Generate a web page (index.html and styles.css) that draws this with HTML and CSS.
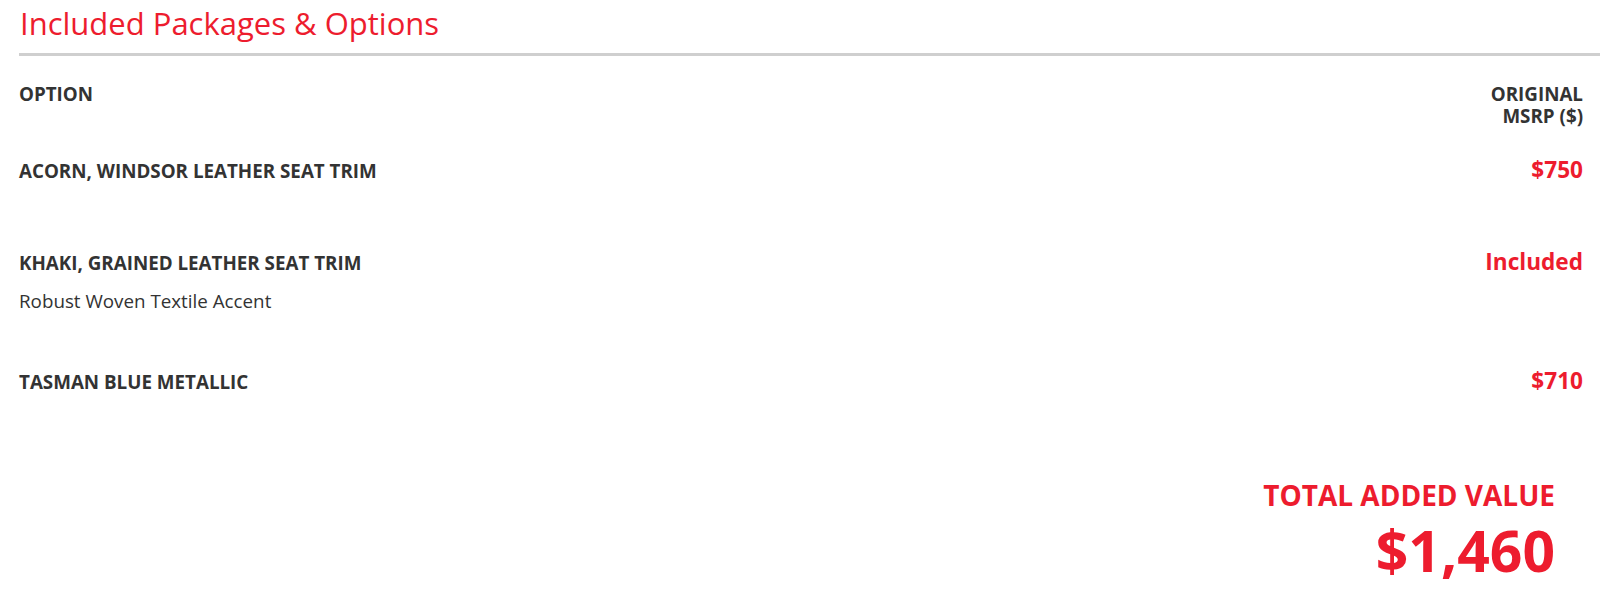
FILE: index.html
```html
<!DOCTYPE html>
<html>
  <head>
    <meta charset="utf-8" />
    <title>Included Packages &amp; Options</title>
    <link rel="stylesheet" href="styles.css">
  </head>

  <body>
    <div id="packages">
      <h2>Included Packages &amp; Options</h2>

      <div class="options">
        <div class="row head">
          <div class="name">OPTION</div>
          <div class="price">ORIGINAL MSRP ($)</div>
        </div>

        <div class="row">
          <div class="name">ACORN, WINDSOR LEATHER SEAT TRIM</div>
          <div class="price red">$750</div>
        </div>

        <div class="row">
          <div class="name">
            KHAKI, GRAINED LEATHER SEAT TRIM
            <div class="desc">Robust Woven Textile Accent</div>
          </div>
          <div class="price red">Included</div>
        </div>

        <div class="row">
          <div class="name">TASMAN BLUE METALLIC</div>
          <div class="price red">$710</div>
        </div>
      </div>

      <div class="total">
        <div class="label">TOTAL ADDED VALUE</div>
        <div class="amount">$1,460</div>
      </div>
    </div>
  </body>
</html>
```
FILE: styles.css
```css
body {
  background-color: #fff;
  color: #333;
  font-family: "Open Sans", "Liberation Sans", sans-serif;
  font-size: 18.8px;
  margin: 0;
  padding: 0;
}

#packages {
  padding-left: 19px;
}

h2 {
  color: #ed1c2e;
  font-size: 31px;
  font-weight: 400;
  line-height: 44px;
  margin: 0;
  padding: 1px 0 8px 1px;
  border-bottom: 3px solid #cfcfcf;
}

.options {
  padding: 27px 17px 0 0;
}

.row {
  display: grid;
  grid-template-columns: 1fr 110px;
  align-items: baseline;
  min-height: 92px;
  padding-bottom: 58px;
  box-sizing: border-box;
}

.row.head {
  min-height: 0;
  padding-bottom: 32px;
}

.name {
  font-weight: 700;
  line-height: 22px;
}

.price {
  font-weight: 700;
  line-height: 22px;
  text-align: right;
}

.red {
  color: #ed1c2e;
  font-size: 22.6px;
}

.desc {
  font-weight: 400;
  margin-top: 16px;
}

.total {
  text-align: right;
  color: #ed1c2e;
  font-weight: 700;
  padding: 16px 45px 0 0;
}

.label {
  font-size: 28px;
  line-height: 34px;
}

.amount {
  font-size: 57px;
  line-height: 57px;
  margin-top: 10px;
}
```
